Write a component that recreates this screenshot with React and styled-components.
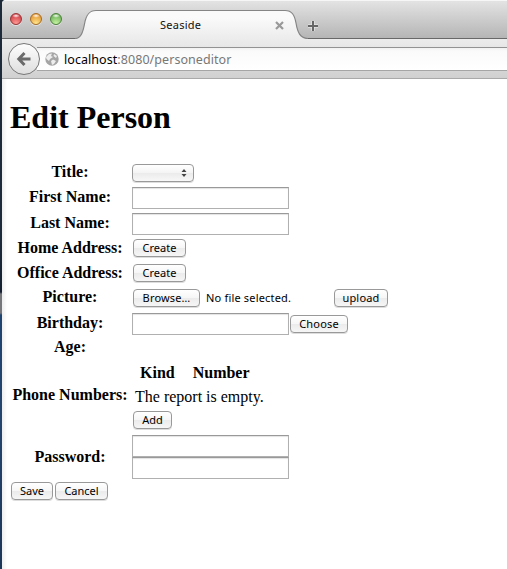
import React from "react";
import styled, { createGlobalStyle } from "styled-components";

const GlobalStyle = createGlobalStyle`
  * { box-sizing: border-box; }
  html, body { margin: 0; padding: 0; overflow: hidden; background: #fff; }
`;

const ui = `"Noto Sans", "Open Sans", sans-serif`;
const serif = `"Liberation Serif", "Times New Roman", serif`;

const Desktop = styled.div`
  width: 507px;
  height: 569px;
  padding-left: 2px;
  overflow: hidden;
  background: linear-gradient(#1d2a3a 0, #1c2b3b 240px, #142032 292px, #76777b 294px, #77777b 313px, #1e4470 315px, #24456e 420px, #1c3658 569px);
`;

const BrowserWindow = styled.div`
  height: 569px;
  display: flex;
  flex-direction: column;
  background: #fff;
  border-top-left-radius: 4px;
  overflow: hidden;
`;

const TabBar = styled.div`
  display: flex;
  align-items: flex-start;
  height: 39px;
  flex: none;
  border-top: 1px solid #f6f6f6;
  border-bottom: 1px solid #686868;
  background: linear-gradient(#e3e3e3, #b5b5b5);
`;

const Lights = styled.div`
  display: flex;
  gap: 8px;
  width: 73px;
  padding: 12px 0 0 8px;
`;

const Light = styled.span`
  width: 12px;
  height: 12px;
  border-radius: 50%;
  border: 1px solid ${(p) => p.$rim};
  background:
    radial-gradient(ellipse 4px 2px at 50% 18%, rgba(255,255,255,.95), rgba(255,255,255,0)),
    radial-gradient(circle at 50% 95%, ${(p) => p.$glow}, ${(p) => p.$tone} 75%);
  box-shadow: 0 1px 0 rgba(255,255,255,.5);
`;

const Tab = styled.div`
  position: relative;
  width: 234px;
  height: 38px;
  flex: none;
`;

const TabShape = styled.svg`
  position: absolute;
  left: 0;
  top: 0;
  display: block;
`;

const TabContent = styled.div`
  position: relative;
  display: flex;
  align-items: center;
  height: 28px;
  margin-top: 10px;
  padding-left: 85px;
`;

const TabTitle = styled.span`
  width: 115px;
  font: 11px/14px ${ui};
  color: #111;
  letter-spacing: 0.26px;
`;

const NewTab = styled.svg`
  margin: 19px 0 0 -2px;
`;

const Toolbar = styled.div`
  display: flex;
  align-items: center;
  height: 40px;
  flex: none;
  border-bottom: 1px solid #a9a9a9;
  background: linear-gradient(#ececec, #d0d0d0);
`;

const BackButton = styled.div`
  position: relative;
  z-index: 1;
  display: flex;
  align-items: center;
  justify-content: center;
  width: 32px;
  height: 32px;
  margin: 0 0 0 6px;
  border-radius: 50%;
  border: 1px solid #777;
  background: linear-gradient(#fdfdfd, #dedede);
`;

const AddressBar = styled.div`
  display: flex;
  align-items: center;
  gap: 5px;
  flex: 1;
  height: 24px;
  margin-left: -3px;
  padding-left: 8px;
  border-top: 1px solid #929292;
  border-bottom: 1px solid #a5a5a5;
  background: linear-gradient(#f1f1f1, #fafafa 3px, #fff);
`;

const Url = styled.span`
  padding-top: 2px;
  font: 12.5px/20px ${ui};
  color: #777;
  letter-spacing: 0.06px;
`;

const Host = styled.span`
  color: #000;
`;

const Page = styled.main`
  flex: 1;
  background: linear-gradient(90deg, #eee 0, #fff 5px);
  font: 16px/18px ${serif};
  color: #000;
`;

const Heading = styled.h1`
  height: 81px;
  margin: 0;
  padding: 20px 0 0 8px;
  font: bold 32px/37px ${serif};
`;

const Row = styled.div`
  display: flex;
  align-items: center;
  height: ${(p) => p.$h}px;
`;

const Label = styled.div`
  width: 120px;
  margin: ${(p) => p.$drop || 0}px 2px 0 8px;
  text-align: center;
  font-weight: bold;
  white-space: nowrap;
`;

const Controls = styled.div`
  display: flex;
  flex-direction: ${(p) => (p.$stack ? "column" : "row")};
  align-items: ${(p) => (p.$stack ? "flex-start" : "center")};
  margin-bottom: ${(p) => p.$lift || 0}px;
`;

const Field = styled.input`
  width: 157px;
  height: 22px;
  padding: 2px;
  border: 1px solid #b0b0b0;
  border-top-color: #999;
  border-radius: 0;
  outline: 0;
  background: #fff;
  box-shadow: inset 0 1px 1px #e3e3e3;
  display: block;
`;

const Button = styled.button`
  width: ${(p) => p.$w}px;
  height: 18px;
  flex: none;
  margin: ${(p) => p.$m || "0 0 0 1px"};
  padding: 0;
  border: 1px solid #999;
  border-radius: 4px;
  background: linear-gradient(#fff, #f6f6f6 50%, #ebebeb 51%, #f6f6f6);
  box-shadow: 0 1px 0 #ddd;
  font: 11px/14px ${ui};
  letter-spacing: ${(p) => p.$ls || 0}px;
  color: #000;
  white-space: nowrap;
`;

const Select = styled.div`
  display: flex;
  align-items: center;
  justify-content: flex-end;
  width: 62px;
  height: 18px;
  padding-right: 6px;
  border: 1px solid #999;
  border-radius: 4px;
  background: linear-gradient(#fff, #f4f4f4 50%, #ebebeb 51%, #f7f7f7);
  box-shadow: 0 1px 0 #ddd;
`;

const FileNote = styled.span`
  width: 127px;
  padding-left: 6px;
  font: 11px/14px ${ui};
  letter-spacing: 0.18px;
  white-space: nowrap;
`;

const ReportHead = styled.div`
  display: flex;
  gap: 18px;
  padding: 4px 0 0 8px;
  height: 28px;
  font-weight: bold;
`;

const ReportText = styled.div`
  height: 23px;
  padding-left: 3px;
`;

const Actions = styled.div`
  display: flex;
  padding: 3px 0 0 9px;
`;

export default function App() {
  return (
    <Desktop>
      <GlobalStyle />
      <BrowserWindow>
        <TabBar>
          <Lights>
            <Light $rim="#983437" $tone="#d3444a" $glow="#ff9b95" />
            <Light $rim="#a56b25" $tone="#e69b35" $glow="#ffe891" />
            <Light $rim="#4c803c" $tone="#72b65c" $glow="#c8f4a4" />
          </Lights>
          <Tab>
            <TabShape width="234" height="38" viewBox="0 0 234 38">
              <defs>
                <linearGradient id="tabFill" x1="0" y1="0" x2="0" y2="1">
                  <stop offset="0.25" stopColor="#fafafa" />
                  <stop offset="1" stopColor="#ececec" />
                </linearGradient>
              </defs>
              <path d="M0 37.5C6 37.5 8 31 9.500 23C11 14 14 9.500 21 9.500H210C217 9.500 219.500 14 221 22C222.500 31 225 37.500 233 37.500V38H0Z" fill="url(#tabFill)" />
              <path d="M0 37.5C6 37.5 8 31 9.500 23C11 14 14 9.500 21 9.500H210C217 9.500 219.500 14 221 22C222.500 31 225 37.500 233 37.500" fill="none" stroke="#858585" strokeWidth="1.2" />
            </TabShape>
            <TabContent>
              <TabTitle>Seaside</TabTitle>
              <svg width="9" height="9" viewBox="0 0 9 9">
                <path d="M1 1L8 8M8 1L1 8" stroke="#999" strokeWidth="2.200" />
              </svg>
            </TabContent>
          </Tab>
          <NewTab width="12" height="12" viewBox="0 0 12 12">
            <path d="M6 1V11M1 6H11" stroke="#f1f1f1" strokeWidth="3" />
            <path d="M6 1V11M1 6H11" stroke="#666" strokeWidth="2" />
          </NewTab>
        </TabBar>
        <Toolbar>
          <BackButton>
            <svg width="16" height="16" viewBox="0 0 16 16">
              <path d="M8.500 2L2.800 8L8.500 14M3 8H14.500" fill="none" stroke="#6a6a6a" strokeWidth="3" />
            </svg>
          </BackButton>
          <AddressBar>
            <svg width="14" height="14" viewBox="0 0 14 14">
              <circle cx="7" cy="7" r="6.700" fill="#a5a5a5" />
              <path d="M1 5L4 2L7 1.500L6 4L8 5L5 7L4 9L1.500 7ZM9 2L12 4L11 6L8.500 4ZM6 9L8 7.500L11 9L9 12L7 13Z" fill="#ededed" />
            </svg>
            <Url><Host>localhost</Host>:8080/personeditor</Url>
          </AddressBar>
        </Toolbar>
        <Page>
          <Heading>Edit Person</Heading>
          <Row $h={25}>
            <Label $drop={-1}>Title:</Label>
            <Select>
              <svg width="6" height="8" viewBox="0 0 6 8">
                <path d="M3 0L5.500 3H.5ZM3 8L.5 5H5.500Z" fill="#444" />
              </svg>
            </Select>
          </Row>
          <Row $h={26}><Label $drop={-2}>First Name:</Label><Field type="text" /></Row>
          <Row $h={26}><Label $drop={-2}>Last Name:</Label><Field type="text" /></Row>
          <Row $h={22}><Label>Home Address:</Label><Button $w={53}>Create</Button></Row>
          <Row $h={27}><Label>Office Address:</Label><Button $w={53}>Create</Button></Row>
          <Row $h={24}>
            <Label $drop={-2}>Picture:</Label>
            <Controls>
              <Button $w={67} $ls={0.15}>Browse…</Button>
              <FileNote>No file selected.</FileNote>
              <Button $w={54} $m="0 0 0 7px" $ls={0.2}>upload</Button>
            </Controls>
          </Row>
          <Row $h={27}>
            <Label $drop={-2}>Birthday:</Label>
            <Field type="text" />
            <Button $w={58} $ls={0.2}>Choose</Button>
          </Row>
          <Row $h={21}><Label $drop={-1}>Age:</Label></Row>
          <Row $h={77}>
            <Label $drop={-3}>Phone Numbers:</Label>
            <Controls $stack $lift={4}>
              <ReportHead><span>Kind</span><span>Number</span></ReportHead>
              <ReportText>The report is empty.</ReportText>
              <Button $w={39}>Add</Button>
            </Controls>
          </Row>
          <Row $h={44}>
            <Label $drop={-1}>Password:</Label>
            <Controls $stack>
              <Field type="password" />
              <Field type="password" />
            </Controls>
          </Row>
          <Actions>
            <Button $w={42} $m="0">Save</Button>
            <Button $w={53} $m="0 0 0 2px">Cancel</Button>
          </Actions>
        </Page>
      </BrowserWindow>
    </Desktop>
  );
}
